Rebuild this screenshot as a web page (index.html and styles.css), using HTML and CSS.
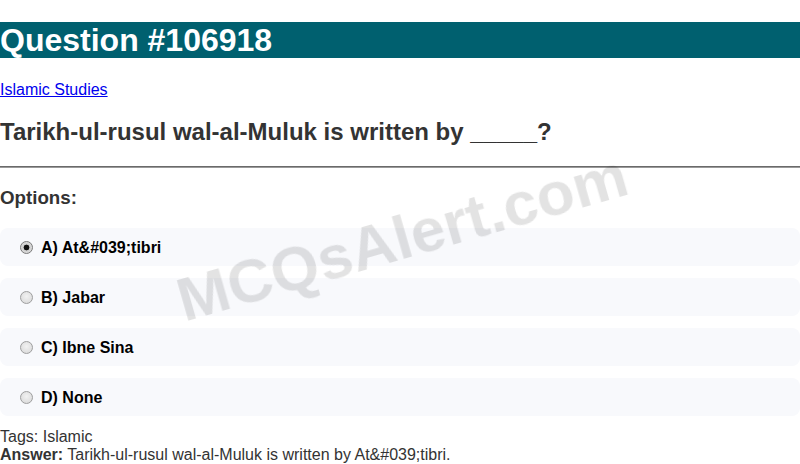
FILE: index.html
```html
<!DOCTYPE html>
<html>
<head>
<meta charset="utf-8">
<link rel="stylesheet" href="styles.css">
</head>
<body>
<h1 class="title">Question #106918</h1>
<p class="cat"><a href="#">Islamic Studies</a></p>
<h2 class="question">Tarikh-ul-rusul wal-al-Muluk is written by _____?</h2>
<hr class="sep">
<h3 class="opt-head">Options:</h3>
<div class="options">
  <label class="option"><input type="radio" name="q" checked> A) At&amp;#039;tibri</label>
  <label class="option"><input type="radio" name="q"> B) Jabar</label>
  <label class="option"><input type="radio" name="q"> C) Ibne Sina</label>
  <label class="option"><input type="radio" name="q"> D) None</label>
</div>
<div class="meta">
  <div>Tags: Islamic</div>
  <div><strong>Answer:</strong> Tarikh-ul-rusul wal-al-Muluk is written by At&amp;#039;tibri.</div>
</div>
<div class="watermark">MCQsAlert.com</div>
</body>
</html>
```
FILE: styles.css
```css
html, body {
  margin: 0;
  padding: 0;
  background: #fff;
  font-family: "Liberation Sans", Arial, sans-serif;
  color: #333;
  overflow: hidden;
}
.title {
  background: #00606f;
  color: #fff;
  font-size: 32px;
  font-weight: bold;
  margin: 22px 0 23px;
  line-height: 36px;
}
.cat {
  margin: 0;
  font-size: 16px;
  line-height: 18px;
}
.cat a {
  color: #0000ee;
}
.question {
  font-size: 24px;
  font-weight: bold;
  margin: 19px 0 20px;
  line-height: 28px;
  color: #333;
}
.sep {
  margin: 0;
  border: 0;
  border-top: 1px solid #6a6a6a;
  border-bottom: 1px solid #9a9a9a;
  height: 0;
}
.opt-head {
  font-size: 18.72px;
  font-weight: bold;
  margin: 19px 0 20px;
  line-height: 21px;
  color: #333;
}
.options {
  display: flex;
  flex-direction: column;
  gap: 12px;
}
.option {
  display: flex;
  align-items: center;
  background: #f8f9fc;
  border-radius: 8px;
  height: 38px;
  padding: 2px 15px 0;
  box-sizing: border-box;
  font-size: 16px;
  font-weight: bold;
  color: #000;
}
.option input {
  -webkit-appearance: none;
  appearance: none;
  margin: 0 8px 0 5px;
  width: 13px;
  height: 13px;
  box-sizing: border-box;
  border-radius: 50%;
  border: 1px solid #9e9e9e;
  background: radial-gradient(circle at 50% 40%, #f2f2f2 0%, #d6d6d6 100%);
  position: relative;
  top: -1px;
}
.option input:checked {
  background: radial-gradient(circle, #111 0 2.6px, #cfcfcf 3.2px, #e6e6e6 100%);
  border-color: #7a7a7a;
}
.meta {
  margin-top: 12px;
  font-size: 16px;
  line-height: 18px;
  color: #333;
}
.watermark {
  position: fixed;
  left: 402px;
  top: 237px;
  transform: translate(-50%, -50%) rotate(-16deg);
  font-size: 62px;
  font-weight: bold;
  color: rgba(0, 0, 0, 0.11);
  white-space: nowrap;
  pointer-events: none;
}
```
